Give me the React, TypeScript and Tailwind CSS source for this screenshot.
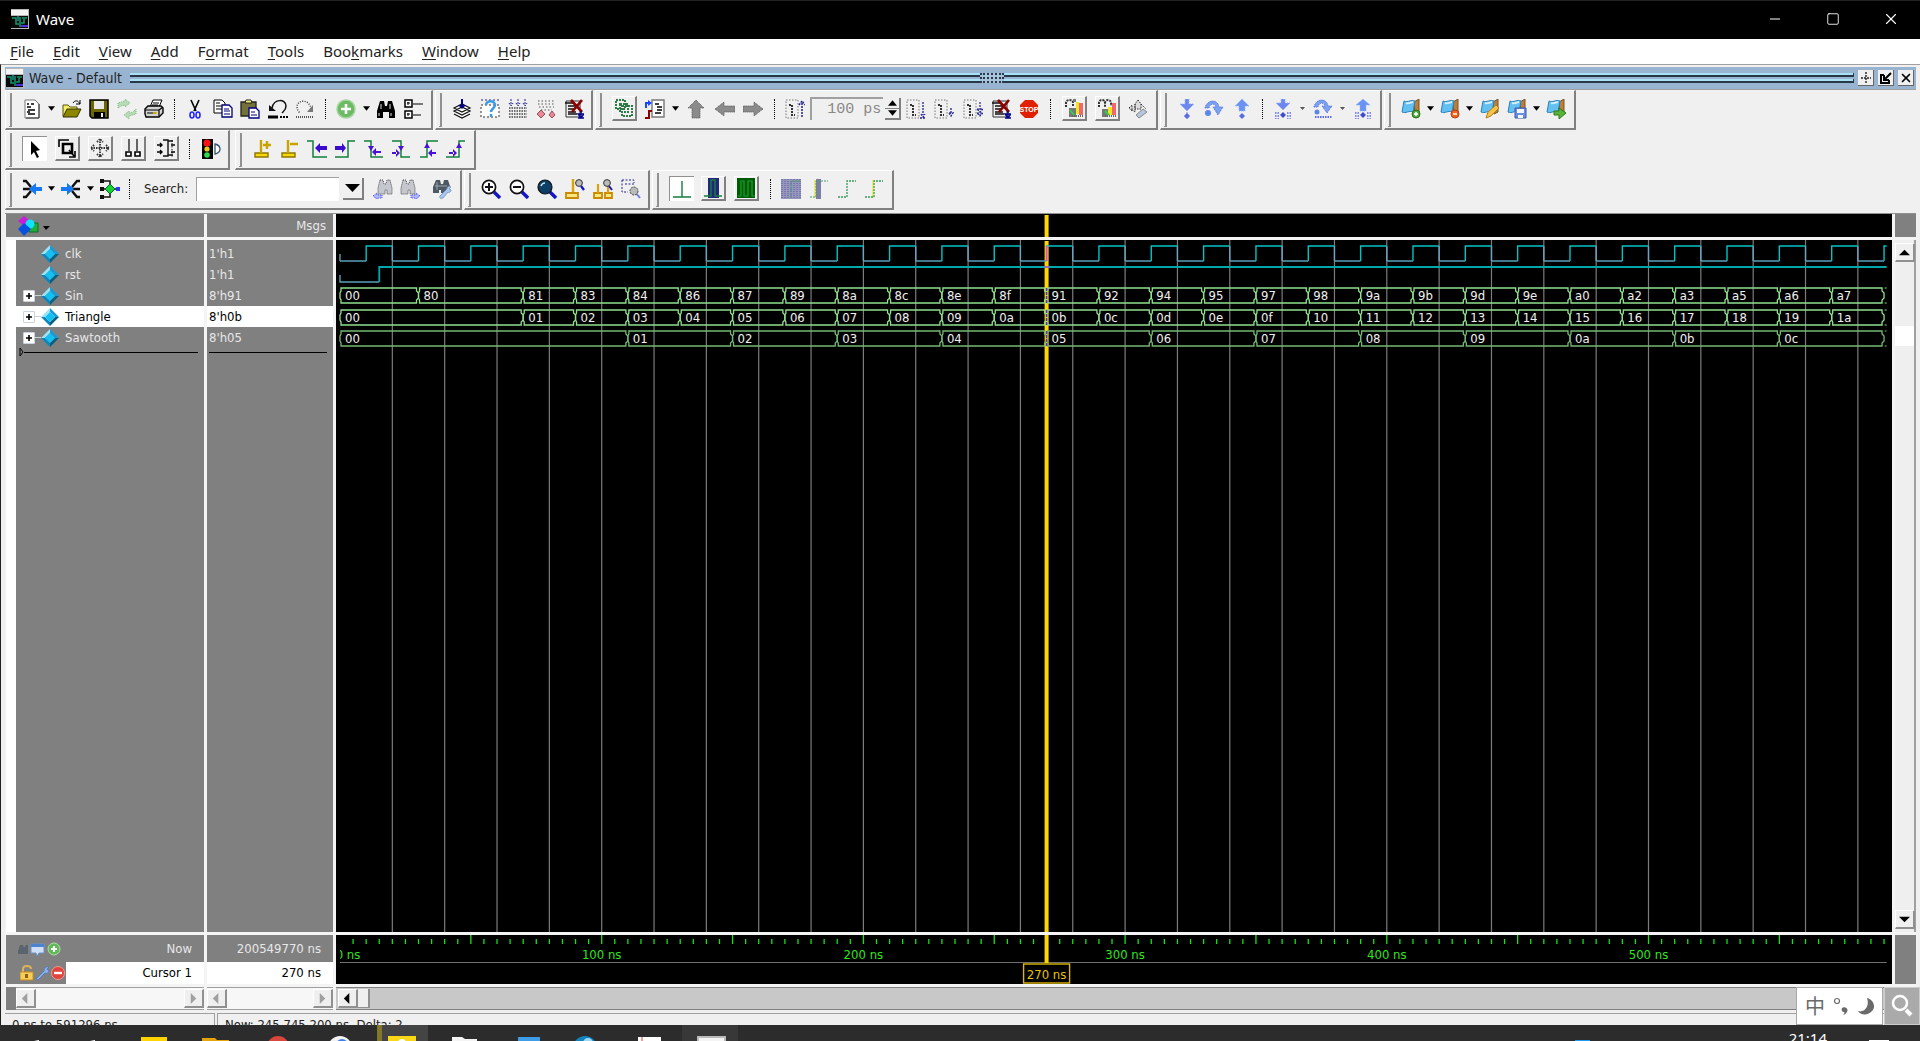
import type { ReactNode } from "react";
import { Minus, Square, X } from "lucide-react";

const UI = "font-['DejaVu_Sans_Condensed','DejaVu_Sans',sans-serif]";

// ---------- Icons ----------

function Svg({ children, w = 20 }: { children: ReactNode; w?: number }) {
    return (
        <svg width={w} height="20" viewBox={`0 0 ${w} 20`} fill="none" className="shrink-0">
            {children}
        </svg>
    );
}

function WaveLogo() {
    return (
        <Svg>
            <path d="M1 0h18v20H1z" fill="#b8b8b8" />
            <path d="M1 1h17v5H1z" fill="#f4f4f4" />
            <path d="M1 7h17v12H1z" fill="#0a0a0a" />
            <path d="M2 9h4v6h3M10 8v10M12 9h5M11 14h3v-4" stroke="#109a68" strokeWidth="1.5" />
            <path d="M8 7v5" stroke="#38c8e8" />
            <path d="M11 17h7" stroke="#4a2ee0" strokeWidth="2" />
        </Svg>
    );
}

const page = "M3 1h10l4 4v14H3z";
const stack = "M2 12l8-4 8 4-8 4zM2 15l8 4 8-4M2 9l8-4 8 4-8 4z";

const icons: Record<string, ReactNode> = {
    doc: (
        <Svg>
            <path d={page} fill="#fff" stroke="#777" />
            <path d="M5 5h2M9 5h3M5 8h4M6 11h7M5 13h3M6 15h7" stroke="#000" strokeWidth="1.3" />
            <path d="M17 5v14H4" stroke="#333" />
        </Svg>
    ),
    open: (
        <Svg>
            <path d="M1 17V6h5l2 2h7v3" fill="#f4ee66" stroke="#55500a" />
            <path d="M1 18l4-8h14l-4 8z" fill="#8c8600" stroke="#333000" />
            <path d="M11 4c2-3 5-3 7 1M18 1v4h-4" stroke="#000" />
        </Svg>
    ),
    save: (
        <Svg>
            <path d="M1 1h18v18H3l-2-2z" fill="#6b6600" stroke="#000" strokeWidth="1.5" />
            <path d="M5 2h10v8H5z" fill="#e8e8e8" />
            <path d="M5 13h11v6H5z" fill="#000" />
            <path d="M12 14h2v4h-2z" fill="#eee" />
        </Svg>
    ),
    refresh: (
        <Svg>
            <path d="M1 9V4l7-2V0l5 4-5 4V6L4 7zM19 10v5l-7 2v3l-5-4 5-4v2l4-1z" fill="#b5dcb5" stroke="#7fb97f" strokeDasharray="1 1" />
        </Svg>
    ),
    print: (
        <Svg>
            <path d="M6 8l3-7h9l-3 7z" fill="#fff" stroke="#000" />
            <path d="M9 4h6M8 6h6" stroke="#000" />
            <path d="M1 10l3-3h13l2 2v5l-4 4H2l-1-3z" fill="#d4d4d4" stroke="#000" strokeWidth="1.4" />
            <path d="M1 11h14v6M3 14h9M15 11l4-3" stroke="#000" strokeWidth="1.2" />
            <path d="M9 14h4" stroke="#e0c000" strokeWidth="1.5" />
        </Svg>
    ),
    cut: (
        <Svg>
            <path d="M6 1l5 11M14 1L9 12" stroke="#000" strokeWidth="1.6" />
            <ellipse cx="7" cy="16" rx="2" ry="3" stroke="#2424ff" strokeWidth="1.6" />
            <ellipse cx="13" cy="16" rx="2" ry="3" stroke="#2424ff" strokeWidth="1.6" />
        </Svg>
    ),
    copy: (
        <Svg>
            <path d="M1 1h8l3 3v10H1z" fill="#fff" stroke="#000" />
            <path d="M3 4h4M3 7h6M3 10h6" stroke="#000" />
            <path d="M9 6h7l3 3v9H9z" fill="#fff" stroke="#00007c" strokeWidth="1.3" />
            <path d="M11 10h5M11 12h6M11 15h6" stroke="#00007c" />
        </Svg>
    ),
    paste: (
        <Svg>
            <path d="M1 3h15v14H1z" fill="#74723a" stroke="#222" strokeWidth="1.3" />
            <path d="M5 4l1-3h5l1 3z" fill="#f4ee66" stroke="#222" />
            <path d="M9 9h7l3 3v7H9z" fill="#fff" stroke="#00007c" strokeWidth="1.3" />
            <path d="M11 13h4M11 16h6" stroke="#00007c" />
        </Svg>
    ),
    undo: (
        <Svg>
            <path d="M4 9C6-1 18 0 18 7c0 4-2 5-4 7" stroke="#111" strokeWidth="1.5" />
            <path d="M1 6v6h7z" fill="#111" />
            <path d="M0 18h10" stroke="#000" strokeWidth="3" />
            <path d="M12 18h8" stroke="#000" strokeWidth="2" strokeDasharray="2 1" />
        </Svg>
    ),
    redo: (
        <Svg>
            <path d="M16 10C15 0 2 0 2 8c0 3 2 5 3 6" stroke="#333" strokeWidth="1.4" strokeDasharray="1 1.4" />
            <path d="M18 6v7h-6z" fill="#777" />
            <path d="M1 18h18" stroke="#555" strokeWidth="2" strokeDasharray="1 1" />
        </Svg>
    ),
    plus: (
        <Svg>
            <circle cx="10" cy="10" r="9" fill="#6cbb62" stroke="#a3d49b" strokeWidth="1.5" />
            <path d="M10 5v10M5 10h10" stroke="#fff" strokeWidth="2.6" />
        </Svg>
    ),
    find: (
        <Svg>
            <path d="M4 2h4l1 5h2l1-5h4l3 10v7h-6v-6H7v6H1v-7z" fill="#000" />
            <path d="M5 5v5M14 5v5M3 14v3M15 14v3" stroke="#ddd" />
        </Svg>
    ),
    tree: (
        <Svg>
            <path d="M1 1h7v7H1zM1 12h7v7H1z" fill="#fff" stroke="#000" strokeWidth="1.5" />
            <path d="M3 4h3M4 3v3M3 15h3M4 14v3M9 5h10M9 16h8" stroke="#000" />
        </Svg>
    ),
    compile: (
        <Svg>
            <path d={stack} fill="#fff" stroke="#111" strokeWidth="1.2" />
            <path d="M9 0h2v6h3l-4 4-4-4h3z" fill="#00008b" />
        </Svg>
    ),
    question: (
        <Svg>
            <path d="M1 6h18v12H1z" fill="#fff" stroke="#333" strokeDasharray="2 2" />
            <path d="M1 1h18" stroke="#22228b" strokeDasharray="2 2" />
            <path d="M6 6c0-5 9-5 9 0 0 3-4 4-4 7M11 15v3" stroke="#3a9be8" strokeWidth="2.5" />
        </Svg>
    ),
    compileAll: (
        <Svg>
            <path d="M3 0v5M10 0v5M17 0v5M1 4l2 3 2-3M8 4l2 3 2-3M15 4l2 3 2-3" stroke="#22228b" strokeDasharray="2 1" />
            <path d="M1 9h18M1 12h18M1 15h18M1 18h18" stroke="#444" strokeWidth="1.6" strokeDasharray="1.5 1" />
        </Svg>
    ),
    elaborate: (
        <Svg>
            <path d="M2 2h16M2 5h16M3 8h15M5 11h11" stroke="#888" strokeWidth="1.5" strokeDasharray="1.5 2" />
            <path d="M5 11l4 4-4 4-4-4zM16 12l3 4-3 3-3-3z" fill="#e58a96" stroke="#985058" />
        </Svg>
    ),
    stopDoc: (
        <Svg>
            <path d="M2 2h14v16H2z" fill="#eee" stroke="#333" />
            <path d="M1 4h9M4 7h8M4 10h6M4 13h8M4 15h9" stroke="#111" strokeWidth="1.5" />
            <path d="M7 1l11 12M18 1L8 13" stroke="#8b0000" strokeWidth="2.6" />
            <path d="M17 12v6M14 15l3 4 3-4zM14 19h6" stroke="#00008b" strokeWidth="1.3" />
        </Svg>
    ),
    link: (
        <Svg>
            <path d="M2 2h9v9H2zM8 8h10v10H8zM6 6h8v8H6z" stroke="#2c7a45" strokeWidth="2" strokeDasharray="2 1" />
        </Svg>
    ),
    restart: (
        <Svg>
            <path d="M7 1h12v17H7z" fill="#fff" stroke="#777" strokeWidth="1.4" />
            <path d="M10 5h4M12 8h5M12 11h5M10 14h6" stroke="#000" strokeWidth="1.4" />
            <path d="M1 9V4h3" stroke="#1747ff" strokeWidth="2" />
            <path d="M3 1l4 3-4 3z" fill="#1747ff" />
            <path d="M0 19h4v-7h3" stroke="#8b0000" strokeWidth="2" />
        </Svg>
    ),
    up: (
        <Svg>
            <path d="M10 1l8 8h-4v10H6V9H2z" fill="#8b8b8b" stroke="#555" strokeDasharray="1 1" />
        </Svg>
    ),
    left: (
        <Svg>
            <path d="M0 10l9-7v4h11v6H9v4z" fill="#8b8b8b" stroke="#555" strokeDasharray="1 1" />
        </Svg>
    ),
    right: (
        <Svg>
            <path d="M20 10l-9-7v4H0v6h11v4z" fill="#8b8b8b" stroke="#555" strokeDasharray="1 1" />
        </Svg>
    ),
    runUp: (
        <Svg>
            <path d="M1 1h12v18H1z" stroke="#777" strokeDasharray="1.5 1.5" />
            <path d="M4 6h3v10h3" stroke="#333" strokeWidth="2" strokeDasharray="2 1" />
            <path d="M17 18V3M14 6l3-4 3 4" stroke="#22228b" strokeWidth="1.5" strokeDasharray="2 1" />
        </Svg>
    ),
    runA: (
        <Svg>
            <path d="M1 1h12v18H1z" stroke="#777" strokeDasharray="1.5 1.5" />
            <path d="M4 6h3v10h3" stroke="#333" strokeWidth="2" strokeDasharray="2 1" />
            <path d="M17 3v13M15 15l2 3 2-3M14 19h6" stroke="#22228b" strokeWidth="1.3" strokeDasharray="2 1" />
        </Svg>
    ),
    runB: (
        <Svg>
            <path d="M1 1h12v18H1z" stroke="#777" strokeDasharray="1.5 1.5" />
            <path d="M4 6h3v10h3" stroke="#333" strokeWidth="2" strokeDasharray="2 1" />
            <path d="M17 9v6M15 14l2 3 2-3z" stroke="#22228b" strokeWidth="1.3" strokeDasharray="2 1" />
        </Svg>
    ),
    runC: (
        <Svg>
            <path d="M1 1h12v18H1z" stroke="#777" strokeDasharray="1.5 1.5" />
            <path d="M4 6h3v10h3" stroke="#333" strokeWidth="2" strokeDasharray="2 1" />
            <path d="M17 3v13M14 10h6l-3 3zM14 14h6l-3 3z" stroke="#22228b" strokeWidth="1.2" strokeDasharray="2 1" />
        </Svg>
    ),
    stop: (
        <Svg>
            <path d="M6 1h8l5 5v8l-5 5H6l-5-5V6z" fill="#e02000" />
            <text x="10" y="13" textAnchor="middle" fontSize="7" fontWeight="700" fontFamily="Liberation Sans, sans-serif" fill="#fff">
                STOP
            </text>
        </Svg>
    ),
    profA: (
        <Svg>
            <path d="M2 9V5c0-4 7-4 7 0v4" stroke="#333" strokeWidth="2" strokeDasharray="2 1" />
            <path d="M5 10h7v9H5z" fill="#777" />
            <path d="M9 1h3v3H9z" fill="#777" />
            <path d="M12 4h3v12h-3z" fill="#f2e61f" />
            <path d="M15 5h4v12h-4z" fill="#f0686c" />
            <path d="M6 12l4 5" stroke="#2fd04c" strokeWidth="2" />
            <path d="M8 18h11" stroke="#666" strokeWidth="2" strokeDasharray="1 1" />
        </Svg>
    ),
    profB: (
        <Svg>
            <path d="M2 9V5c0-4 6-4 6 0v4M8 5c0-4 6-4 6 0v3" stroke="#333" strokeWidth="2" strokeDasharray="2 1" />
            <path d="M5 11h6v8H5z" fill="#777" />
            <path d="M11 9h4v8h-4z" fill="#f2e61f" />
            <path d="M15 5h4v12h-4z" fill="#f0686c" />
            <path d="M8 13l4 4" stroke="#2fd04c" strokeWidth="2" />
            <path d="M8 18h11" stroke="#666" strokeWidth="2" strokeDasharray="1 1" />
        </Svg>
    ),
    erase: (
        <Svg>
            <path d="M10 1l3 4v5H7V5zM1 9l3-3v6zM7 5v8l-4-3M13 5l5 5" fill="#ddd" stroke="#333" strokeDasharray="1.5 1" />
            <path d="M8 16l7-6 4 3-8 6z" fill="#b5c6dd" stroke="#888" />
        </Svg>
    ),
    stepIn: (
        <Svg>
            <path d="M8 0h4v5h5l-7 7-7-7h5z" fill="#6d87ee" stroke="#8fb4fa" strokeDasharray="1 1" />
            <path d="M10 13v2M10 14l3 3-3 3-3-3z" fill="#5a6ae8" stroke="#8090f0" strokeDasharray="1 1" />
        </Svg>
    ),
    stepOver: (
        <Svg>
            <path d="M1 9c2-9 13-9 14-1h4l-5 8-5-8h3c-1-4-6-4-7 1z" fill="#79a2f0" stroke="#4d63e0" strokeDasharray="1 1" />
            <circle cx="4" cy="14" r="3" fill="#5a88e8" />
        </Svg>
    ),
    stepOut: (
        <Svg>
            <path d="M10 0l7 7h-4v5H7V7H3z" fill="#6d93f2" stroke="#8fb4fa" strokeDasharray="1 1" />
            <path d="M10 14l3 3-3 3-3-3z" fill="#5a6ae8" />
        </Svg>
    ),
    stepInC: (
        <Svg>
            <path d="M8 0h4v4h5l-7 7-7-7h5z" fill="#6d87ee" stroke="#8fb4fa" strokeDasharray="1 1" />
            <path d="M10 13l3 3-3 3-3-3z" fill="#3d4ad8" />
            <path d="M2 14h5M2 17h5M2 20h5M14 14h5M14 17h5M14 20h5" stroke="#5a6ae8" strokeWidth="1.6" strokeDasharray="1.5 1" />
        </Svg>
    ),
    stepOverC: (
        <Svg>
            <path d="M1 8c2-9 13-9 14-1h4l-5 7-5-7h3c-1-4-6-4-7 1z" fill="#79a2f0" stroke="#4d63e0" strokeDasharray="1 1" />
            <circle cx="4" cy="13" r="2.5" fill="#5a88e8" />
            <path d="M2 18h17" stroke="#5a6ae8" strokeWidth="2" strokeDasharray="1.5 1" />
        </Svg>
    ),
    stepOutC: (
        <Svg>
            <path d="M10 0l7 6h-4v6H7V6H3z" fill="#6d93f2" stroke="#8fb4fa" strokeDasharray="1 1" />
            <path d="M10 13l3 3-3 3-3-3z" fill="#3d4ad8" />
            <path d="M2 14h5M2 17h5M2 20h5M14 14h5M14 17h5M14 20h5" stroke="#5a6ae8" strokeWidth="1.6" strokeDasharray="1.5 1" />
        </Svg>
    ),
    pointer: (
        <Svg>
            <path d="M6 2l9 9-4 1 3 6-2 1-3-6-3 3z" fill="#000" />
        </Svg>
    ),
    zoomArea: (
        <Svg>
            <path d="M2 9V2h10" stroke="#000" strokeWidth="1.6" />
            <path d="M6 6h9v9H6z" stroke="#000" strokeWidth="2.6" />
            <path d="M12 12l5 6M18 13v6h-6" stroke="#000" strokeWidth="1.6" />
        </Svg>
    ),
    pan: (
        <Svg>
            <path d="M10 1v18M1 10h18M7 4l3-3 3 3M7 16l3 3 3-3M4 7l-3 3 3 3M16 7l3 3-3 3" stroke="#333" strokeWidth="1.8" strokeDasharray="1.5 1" />
        </Svg>
    ),
    twoCursor: (
        <Svg>
            <path d="M6 1v12M14 1v12" stroke="#444" strokeWidth="1.6" />
            <path d="M3 14h5v4H3zM12 14h5v4h-5z" fill="#fff" stroke="#000" strokeWidth="1.6" />
        </Svg>
    ),
    editMode: (
        <Svg>
            <path d="M7 2h5v16H7M12 3h5M12 17h5" stroke="#111" strokeWidth="1.4" />
            <path d="M16 2v17" stroke="#111" strokeDasharray="1.5 1.5" />
            <path d="M1 7h5M1 14h5M4 5l2 2-2 2M4 12l2 2-2 2M19 7h-4M19 14h-4" stroke="#000" strokeWidth="1.4" />
        </Svg>
    ),
    traffic: (
        <Svg>
            <path d="M1 0h11v20H1z" fill="#000" />
            <circle cx="6" cy="4" r="3.6" fill="#ff1010" />
            <circle cx="6" cy="10" r="2.6" fill="#e8c820" />
            <circle cx="6" cy="16" r="2.8" fill="#30d850" />
            <path d="M14 5c4 1 5 3 5 5s-1 4-5 5z" fill="#fff" stroke="#35556b" strokeWidth="1.3" />
        </Svg>
    ),
    cursorAdd: (
        <Svg>
            <path d="M3 14h13v4H3z" fill="#f6d80c" stroke="#8f7500" strokeWidth="1.4" />
            <path d="M9 1v13M11 6h8M15 2v8" stroke="#c9a400" strokeWidth="2.4" />
        </Svg>
    ),
    cursorDel: (
        <Svg>
            <path d="M3 14h13v4H3z" fill="#f6d80c" stroke="#8f7500" strokeWidth="1.4" />
            <path d="M9 1v13M11 5h8" stroke="#c9a400" strokeWidth="2.4" />
        </Svg>
    ),
    prevEdge: (
        <Svg w={22}>
            <path d="M1 2h6v16h14" stroke="#12803a" strokeWidth="1.5" />
            <path d="M9 9l5-5v3h7v4h-7v3z" fill="#3b0bd0" />
        </Svg>
    ),
    nextEdge: (
        <Svg w={22}>
            <path d="M1 18h13V2h7" stroke="#12803a" strokeWidth="1.5" />
            <path d="M12 9L8 4v3H1v4h7v3z" fill="#3b0bd0" />
        </Svg>
    ),
    prevFall: (
        <Svg w={22}>
            <path d="M2 2h7v16h12" stroke="#12803a" strokeWidth="1.5" />
            <path d="M6 7h6l-3 5zM10 13l4-4v8zM13 12h6v2h-6z" fill="#4a12d8" />
        </Svg>
    ),
    nextFall: (
        <Svg w={22}>
            <path d="M2 2h9v16h9" stroke="#12803a" strokeWidth="1.5" />
            <path d="M8 7h6l-3 5zM10 14L6 10v8zM2 13h5v2H2z" fill="#4a12d8" />
        </Svg>
    ),
    prevRise: (
        <Svg w={22}>
            <path d="M2 18h7V2h11" stroke="#12803a" strokeWidth="1.5" />
            <path d="M6 9h6L9 4zM10 14l4-4v8zM13 13h5v2h-5z" fill="#4a12d8" />
        </Svg>
    ),
    nextRise: (
        <Svg w={22}>
            <path d="M1 18h13V2h6" stroke="#12803a" strokeWidth="1.5" />
            <path d="M11 9h6l-3-5zM12 14l-4-4v8zM4 13h5v2H4z" fill="#4a12d8" />
        </Svg>
    ),
    mergeL: (
        <Svg>
            <path d="M1 2h3l5 6M1 10h8M1 18h3l5-6" stroke="#111" strokeWidth="2.4" />
            <path d="M7 10l7-6v4h6v4h-6v4z" fill="#1479f2" />
        </Svg>
    ),
    mergeR: (
        <Svg>
            <path d="M19 2h-3l-5 6M19 10h-8M19 18h-3l-5-6" stroke="#111" strokeWidth="2.4" />
            <path d="M13 10L6 4v4H0v4h6v4z" fill="#1479f2" />
        </Svg>
    ),
    node: (
        <Svg>
            <path d="M3 2h7v16H3M3 10h13" stroke="#111" strokeWidth="1.5" />
            <path d="M0 0h4v4H0zM0 8h4v4H0zM0 16h4v4H0z" fill="#111" />
            <path d="M10 5l5 5-5 5-5-5z" fill="#15d335" stroke="#063" />
            <path d="M16 8h4v4h-4z" fill="#2b3cf5" />
        </Svg>
    ),
    findPrev: (
        <Svg>
            <path d="M7 1h3l1 4h2l1-4h3l2 8v6h-5v-4h-2v4H5V9z" fill="#c4c8ce" stroke="#444" strokeDasharray="1 1" />
            <path d="M0 17l4-3v2h5v3H4v1z" fill="#b0b6ff" stroke="#4450e8" strokeDasharray="1 1" />
        </Svg>
    ),
    findNext: (
        <Svg>
            <path d="M3 1h3l1 4h2l1-4h3l2 8v6h-5v-4H8v4H1V9z" fill="#c4c8ce" stroke="#444" strokeDasharray="1 1" />
            <path d="M20 17l-4-3v2h-5v3h5v1z" fill="#b0b6ff" stroke="#4450e8" strokeDasharray="1 1" />
        </Svg>
    ),
    findOpts: (
        <Svg>
            <path d="M4 1h4l1 4h2l1-4h4l2 6-5 7H9v-3H7v3H1V8z" fill="#4e5862" />
            <path d="M3 7h12M5 3v8" stroke="#9aa6b2" />
            <path d="M8 17l7-7c0-3 3-3 4-2l-2 2 2 1c0 2-2 3-3 2l-5 6c-2 1-4 0-3-2z" fill="#a9c8f0" stroke="#7d99c0" />
        </Svg>
    ),
    zoomIn: (
        <Svg>
            <path d="M13 13l6 6" stroke="#1414c8" strokeWidth="3.4" />
            <circle cx="8" cy="8" r="6.6" fill="#fff" stroke="#111" strokeWidth="1.7" />
            <path d="M8 4v8M4 8h8" stroke="#111" strokeWidth="2" />
        </Svg>
    ),
    zoomOut: (
        <Svg>
            <path d="M13 13l6 6" stroke="#1414c8" strokeWidth="3.4" />
            <circle cx="8" cy="8" r="6.6" fill="#fff" stroke="#111" strokeWidth="1.7" />
            <path d="M4 8h8" stroke="#111" strokeWidth="2" />
        </Svg>
    ),
    zoomFull: (
        <Svg>
            <path d="M13 13l6 6" stroke="#1414c8" strokeWidth="3.4" />
            <circle cx="8" cy="8" r="7" fill="#0c3e66" stroke="#111" strokeWidth="1.2" />
            <path d="M4 7c1-3 3-3 4-3" stroke="#c7e4f6" strokeWidth="1.5" />
        </Svg>
    ),
    zoomCursor: (
        <Svg>
            <path d="M1 14h12v5H1z" fill="#ffe680" stroke="#c98a00" strokeWidth="1.8" />
            <path d="M8 0v13" stroke="#dba400" strokeWidth="2.4" />
            <path d="M16 7l3 4" stroke="#1414c8" strokeWidth="2.4" />
            <circle cx="14" cy="4" r="3.4" fill="#bbb" stroke="#333" />
        </Svg>
    ),
    zoomTwo: (
        <Svg>
            <path d="M1 14h8v5H1zM12 14h7v5h-7z" fill="#ffe680" stroke="#c98a00" strokeWidth="1.8" />
            <path d="M5 5v9M15 5v9" stroke="#dba400" strokeWidth="2.2" />
            <path d="M16 7l3 4" stroke="#1414c8" strokeWidth="2" />
            <circle cx="14" cy="4" r="3.4" fill="#bbb" stroke="#333" />
        </Svg>
    ),
    zoomSel: (
        <Svg>
            <path d="M1 1h12v3M1 1v12h6M4 5h10" stroke="#22228b" strokeDasharray="2 1.5" />
            <path d="M15 14l4 5" stroke="#6c7ce0" strokeWidth="2" />
            <circle cx="13" cy="12" r="4" fill="#bbb" stroke="#444" strokeDasharray="2 1" />
        </Svg>
    ),
    expNone: (
        <Svg>
            <path d="M10 2v16M1 18h18" stroke="#12803a" strokeWidth="1.4" />
        </Svg>
    ),
    expDelta: (
        <Svg>
            <path d="M5 0h11v20H5z" fill="#24267e" />
            <path d="M1 18h7V2h4v16h7" stroke="#12803a" strokeWidth="1.4" />
        </Svg>
    ),
    expEvent: (
        <Svg>
            <path d="M1 0h18v20H1z" fill="#005a00" />
            <path d="M2 18h3V3h3v15h4V3h4v15h3" stroke="#18a038" strokeWidth="1.2" />
        </Svg>
    ),
    expAll: (
        <Svg>
            <path d="M0 0h20v20H0z" fill="#9797bd" />
            <path d="M1 0v20M4 0v20M7 0v20M10 0v20M13 0v20M16 0v20M19 0v20" stroke="#5b5ba0" strokeDasharray="1 1" />
            <path d="M10 19V2h9" stroke="#479d6d" strokeDasharray="2 1" />
        </Svg>
    ),
    expCur: (
        <Svg>
            <path d="M7 0h5v20H7z" fill="#7d7da8" />
            <path d="M6 1v18" stroke="#e8e84a" strokeWidth="1.5" />
            <path d="M1 18h6V2h12" stroke="#479d6d" strokeDasharray="2 1" />
        </Svg>
    ),
    colAll: (
        <Svg>
            <path d="M1 18h9V2h9" stroke="#359a5c" strokeWidth="1.3" strokeDasharray="2 1" />
        </Svg>
    ),
    colCur: (
        <Svg>
            <path d="M9 1v18" stroke="#ecec3c" strokeWidth="1.5" />
            <path d="M1 18h9V2h9" stroke="#359a5c" strokeWidth="1.3" strokeDasharray="2 1" />
        </Svg>
    ),
};

function Bookmark({ children }: { children: ReactNode }) {
    return (
        <Svg>
            <path d="M13 3l5-3v13l-4 2z" fill="#b9803c" stroke="#7c5220" />
            <path d="M3 2c4 2 7-2 11 0l-2 11c-4-2-7 2-11 0z" fill="#62c0f2" stroke="#2f7fb5" />
            <path d="M5 4c3 1 5-1 7-1" stroke="#d4f0ff" strokeWidth="2" />
            {children}
        </Svg>
    );
}

icons.bmAdd = (
    <Bookmark>
        <circle cx="15" cy="15" r="4" fill="#4fa83c" stroke="#2b6f1e" />
        <path d="M15 13v4M13 15h4" stroke="#fff" strokeWidth="1.5" />
    </Bookmark>
);
icons.bmDel = (
    <Bookmark>
        <circle cx="15" cy="15" r="4" fill="#f0641e" stroke="#b94010" />
        <path d="M13 15h4" stroke="#fff" strokeWidth="1.5" />
    </Bookmark>
);
icons.bmEdit = (
    <Bookmark>
        <path d="M6 19l2-6 8-7 3 3-8 8z" fill="#f3c24a" stroke="#b5801e" />
    </Bookmark>
);
icons.bmSave = (
    <Bookmark>
        <path d="M8 9h11v10H8z" fill="#6c8ee0" stroke="#3b58a8" />
        <path d="M10 10h7v4h-7zM11 16h5v3h-5z" fill="#f4f6ff" />
    </Bookmark>
);
icons.bmGo = (
    <Bookmark>
        <path d="M8 12h5V9l7 5-7 6v-4H8z" fill="#58b53a" stroke="#2c7a1b" />
    </Bookmark>
);

// ---------- Toolbars ----------

// "v" = drop-down arrow, "d" = small dimmed arrow, "|" = separator, "[name]" = raised toggle, "(name)" = pressed toggle
function Tool({ item }: { item: string }) {
    if (item === "|") {
        return <div className="w-[13px] shrink-0 flex justify-center"><div className="h-5 border-l border-dotted border-black" /></div>;
    }
    if (item === "v" || item === "d") {
        const w = item === "v" ? 7 : 5;
        return (
            <button aria-label="More" className="w-3 shrink-0 flex justify-center">
                <svg width={w} height="5" viewBox="0 0 8 5"><path d="M0 0h8L4 5z" fill={item === "v" ? "#000" : "#555"} /></svg>
            </button>
        );
    }
    if (item[0] === "[" || item[0] === "(") {
        const name = item.slice(1, -1);
        return (
            <div className="w-8 shrink-0 flex justify-center">
                <button
                    aria-label={name}
                    className={
                        item[0] === "["
                            ? "size-[25px] flex items-center justify-center border-t border-l border-r-2 border-b-2 border-t-white border-l-white border-r-[#808080] border-b-[#808080]"
                            : "size-[25px] flex items-center justify-center bg-white border-t border-l border-[#909090]"
                    }
                >
                    {icons[name]}
                </button>
            </div>
        );
    }
    return (
        <button aria-label={item} className="w-[27px] h-6 shrink-0 flex items-center justify-center">
            {icons[item]}
        </button>
    );
}

function Tools({ items }: { items: string }) {
    return <>{items.split(" ").map((item, i) => <Tool key={i} item={item} />)}</>;
}

function Group({ width, children }: { width: string; children: ReactNode }) {
    return (
        <div className={`${width} h-10 shrink-0 flex items-start border-t border-l border-t-white border-l-white border-r-2 border-b-2 border-r-[#808080] border-b-[#808080]`}>
            <div className="w-[3px] h-[34px] mt-[2px] ml-[3px] shrink-0 border-r-2 border-b border-[#909090]" />
            <div className="flex-1 h-[35px] pl-[6px] pr-1 flex items-center justify-between">{children}</div>
        </div>
    );
}

// ---------- Wave data ----------

const PX_PER_NS = 2.617;
const CURSOR = 270;
const END = 591;
const tx = (ns: number) => 4 + ns * PX_PER_NS;
const range = (from: number, to: number, step: number) =>
    Array.from({ length: Math.floor((to - from) / step) + 1 }, (_, i) => from + i * step);
const hex = (n: number) => n.toString(16).padStart(2, "0");

const sinValues = "81 83 84 86 87 89 8a 8c 8e 8f 91 92 94 95 97 98 9a 9b 9d 9e a0 a2 a3 a5 a6 a7".split(" ");

const buses: { top: number; color: string; steps: [number, string][] }[] = [
    { top: 48, color: "#90e090", steps: [[0, "00"], [30, "80"], ...sinValues.map((v, i): [number, string] => [70 + i * 20, v])] },
    { top: 70, color: "#90e090", steps: [[0, "00"], ...range(70, 570, 20).map((t, i): [number, string] => [t, hex(i + 1)])] },
    { top: 91, color: "#74b874", steps: [[0, "00"], ...range(110, 550, 40).map((t, i): [number, string] => [t, hex(i + 1)])] },
];

const signals = [
    { name: "clk", value: "1'h1" },
    { name: "rst", value: "1'h1" },
    { name: "Sin", value: "8'h91", bus: true },
    { name: "Triangle", value: "8'h0b", bus: true, selected: true },
    { name: "Sawtooth", value: "8'h05", bus: true },
];

function Bus({ top, color, steps }: (typeof buses)[number]) {
    const bottom = top + 15;
    return (
        <g>
            {steps.map(([t, label], i) => {
                const x1 = tx(t);
                const x2 = tx(i + 1 < steps.length ? steps[i + 1][0] : 590);
                return (
                    <g key={t}>
                        <path
                            d={`M${x2 - 2} ${top}H${x1 + 1}V${top + 3}L${x1} ${top + 5}V${bottom - 5}L${x1 + 1} ${bottom - 3}V${bottom}H${x2 - 2}V${bottom - 3}L${x2} ${bottom - 5}V${top + 5}L${x2 - 2} ${top + 3}Z`}
                            fill="none"
                            stroke={color}
                            strokeWidth="1.3"
                        />
                        <text x={x1 + 5} y={top + 12} fontSize="13" fill="#f0f0f0">{label}</text>
                    </g>
                );
            })}
            <path d={`M${tx(END)} ${top}h-2M${tx(END)} ${bottom}h-2`} stroke={color} />
        </g>
    );
}

function Waves() {
    const edges = range(10, 590, 20);
    return (
        <svg width="100%" height="100%" className="block">
            {range(20, 580, 20).map((t) => (
                <line key={t} x1={tx(t)} x2={tx(t)} y1="0" y2="100%" stroke="#7c7c7c" strokeWidth="1.2" />
            ))}
            <line x1={tx(CURSOR)} x2={tx(CURSOR)} y1="1" y2="100%" stroke="#ffd700" strokeWidth="4" />
            <path d={`M4 14v7${[0, ...range(20, 580, 20)].map((t) => `M${tx(t)} 21H${tx(t + 10)}`).join("")}`} stroke="#5aa0b8" strokeWidth="1.4" fill="none" />
            <path d={range(20, 580, 20).map((t) => `M${tx(t)} 6V21`).join("")} stroke="#6aa5c4" strokeWidth="1.4" />
            <path d={edges.map((t) => `M${tx(t)} 21V6H${tx(Math.min(t + 10, END))}`).join("")} stroke="#00c4c8" strokeWidth="1.4" fill="none" />
            <path d={`M4 35v7H${tx(15)}`} stroke="#5aa0b8" strokeWidth="1.4" fill="none" />
            <path d={`M${tx(15)} 42V27H${tx(END)}`} stroke="#00a8ac" strokeWidth="1.8" fill="none" />
            {buses.map((b) => <Bus key={b.top} {...b} />)}
            <path d={`M${tx(CURSOR)} 21V6M${tx(CURSOR) - 2} 27h4`} stroke="#ff40c0" strokeWidth="1.6" />
            <path d={`M${tx(CURSOR)} 48v15M${tx(CURSOR)} 70v15M${tx(CURSOR)} 91v15`} stroke="#6030b0" strokeWidth="1.6" strokeDasharray="3 1" />
        </svg>
    );
}

function Ruler() {
    const cx = tx(CURSOR);
    return (
        <svg width="100%" height="49" className="block">
            {range(5, 590, 5).map((t) => (
                <line key={t} x1={tx(t)} x2={tx(t)} y1={t % 50 ? 4 : 0} y2="9" stroke="#18e018" strokeWidth="1.3" />
            ))}
            <clipPath id="plot"><rect x="4" y="0" width="1600" height="49" /></clipPath>
            <g clipPath="url(#plot)">
                {range(0, 500, 100).map((t) => (
                    <text key={t} x={t ? tx(t) : tx(t) + 8} y="24" textAnchor="middle" fontSize="13" fill="#2ee61e">{t} ns</text>
                ))}
            </g>
            <path d={`M4 27.5H${tx(END)}`} stroke="#707070" />
            <path d={`M${cx} 0V28`} stroke="#ffd700" strokeWidth="4" />
            <rect x={cx - 23} y="29" width="46" height="19" stroke="#e0b800" strokeWidth="1.4" fill="#000" />
            <text x={cx} y="44" textAnchor="middle" fontSize="13" fill="#e8c400">270 ns</text>
        </svg>
    );
}

function Gem() {
    return (
        <svg width="18" height="18" viewBox="0 0 18 18" className="shrink-0">
            <path d="M9 0L0 9l4 0 5-5z" fill="#9ae4f8" />
            <path d="M9 0l9 9h-4L9 4z" fill="#1a9ad4" />
            <path d="M0 9l9 9v-4L4 9z" fill="#0c86be" />
            <path d="M18 9l-9 9v-4l5-5z" fill="#06607f" />
            <path d="M9 4l5 5-5 5-5-5z" fill="#12c0f4" />
        </svg>
    );
}

function ScrollButton({ dir, dim }: { dir: "left" | "right" | "up" | "down"; dim?: boolean }) {
    const paths = { left: "M8 0v12L2 6z", right: "M3 0v12l6-6z", up: "M0 9h12L6 3z", down: "M0 3h12L6 9z" };
    return (
        <button aria-label={`Scroll ${dir}`} className="w-5 h-[19px] shrink-0 flex items-center justify-center bg-[#efefef] border-t border-l border-r-2 border-b-2 border-t-white border-l-white border-r-[#909090] border-b-[#909090]">
            <svg width="11" height="11" viewBox="0 0 12 12"><path d={paths[dir]} fill={dim ? "#a0a0a0" : "#000"} /></svg>
        </button>
    );
}

const menus = [["", "F", "ile"], ["", "E", "dit"], ["", "V", "iew"], ["", "A", "dd"], ["F", "o", "rmat"], ["", "T", "ools"], ["Boo", "k", "marks"], ["", "W", "indow"], ["", "H", "elp"]];

const cols = "grid grid-cols-[198px_126px_1fr_21px] gap-x-[3px]";

export default function App() {
    return (
        <div className={`relative h-screen flex flex-col overflow-hidden bg-[#f0f0f0] text-[13px] ${UI}`}>
            {/* Title bar */}
            <header className="h-[39px] shrink-0 pl-[10px] pb-[2px] flex items-center bg-black border-t border-[#222] text-white font-['Noto_Sans',sans-serif]">
                <WaveLogo />
                <h1 className="ml-[6px] text-[15px]">Wave</h1>
                <div className="ml-auto h-full flex">
                    <button aria-label="Minimize" className="w-[58px] flex items-center justify-center"><Minus size={16} strokeWidth={1.5} /></button>
                    <button aria-label="Maximize" className="w-[58px] flex items-center justify-center"><Square size={14} strokeWidth={1.5} /></button>
                    <button aria-label="Close" className="w-[58px] flex items-center justify-center"><X size={18} strokeWidth={1.5} /></button>
                </div>
            </header>

            {/* Menu */}
            <nav className="h-[25px] shrink-0 pl-[10px] pb-px flex items-center gap-[19px] bg-white text-[15px] text-[#222] font-['Noto_Sans',sans-serif]">
                {menus.map(([a, b, c]) => (
                    <button key={b + c}>{a}<span className="underline underline-offset-2">{b}</span>{c}</button>
                ))}
            </nav>

            <main className="flex-1 min-h-0 flex flex-col pl-1 pr-1 border-l border-t border-l-[#222] border-t-[#a0a0a0]">
                {/* Dock title */}
                <div className="mt-[2px] h-[22px] shrink-0 pr-[2px] flex items-center bg-[#99b4d1] text-[#222]">
                    <WaveLogo />
                    <h2 className="ml-1 mr-2 text-sm">Wave - Default</h2>
                    <div className="flex-1 flex flex-col gap-[2px]">
                        <div className="h-1 bg-[#a8e0f4] border-b-2 border-[#283848]" />
                        <div className="h-1 bg-[#a8e0f4] border-b-2 border-[#283848]" />
                    </div>
                    <div className="w-6 h-[10px] flex flex-col justify-between bg-[#a8c4dc]">
                        <div className="border-t-2 border-dotted border-[#283848]" />
                        <div className="border-t-2 border-dotted border-[#283848]" />
                        <div className="border-t-2 border-dotted border-[#283848]" />
                    </div>
                    <div className="flex-1 mr-1 flex flex-col gap-[2px]">
                        <div className="h-1 bg-[#a8e0f4] border-b-2 border-r border-[#283848]" />
                        <div className="h-1 bg-[#a8e0f4] border-b-2 border-r border-[#283848]" />
                    </div>
                    <div className="flex gap-1 text-black">
                        <button aria-label="Zoom pane" className="size-4 flex items-center justify-center bg-[#f0f0f0] border-r border-b border-[#666]">
                            <svg width="12" height="12" viewBox="0 0 12 12"><path d="M6 0v12M1 6h10" stroke="#222" strokeWidth="1.4" strokeDasharray="2 1" /></svg>
                        </button>
                        <button aria-label="Undock" className="size-4 flex items-center justify-center bg-[#f0f0f0] border-r border-b border-[#666]">
                            <svg width="12" height="12" viewBox="0 0 12 12" fill="none"><path d="M4 3H1v8h8V8M11 1L5 7M4 3v5h5" stroke="#000" strokeWidth="2" /></svg>
                        </button>
                        <button aria-label="Close pane" className="size-4 flex items-center justify-center bg-[#f0f0f0] border-r border-b border-[#666]">
                            <X size={14} strokeWidth={3} />
                        </button>
                    </div>
                </div>

                {/* Toolbars */}
                <div className="shrink-0 border-t border-[#a0a0a0]">
                    <div className="flex gap-[2px]">
                        <Group width="w-[428px]"><Tools items="doc v open save refresh print | cut copy paste undo redo | plus v find tree" /></Group>
                        <Group width="w-[158px]"><Tools items="compile question compileAll elaborate stopDoc" /></Group>
                        <Group width="w-[563px]">
                            <Tools items="[link] restart v up left right | runUp" />
                            <div className="flex items-center gap-[2px]">
                                <input
                                    aria-label="Run length"
                                    defaultValue="100 ps"
                                    className="w-[73px] h-[23px] pr-[2px] text-right text-[15px] text-[#888] border-t-2 border-l-2 border-[#a0a0a0] font-['Liberation_Mono',monospace]"
                                />
                                <div className="w-4 flex flex-col">
                                    <button aria-label="Increase" className="h-[11px] flex items-center justify-center border-r-2 border-b border-[#808080]">
                                        <svg width="9" height="6" viewBox="0 0 10 6"><path d="M0 6h10L5 0z" /></svg>
                                    </button>
                                    <button aria-label="Decrease" className="h-[11px] flex items-center justify-center border-r-2 border-b-2 border-[#808080]">
                                        <svg width="9" height="6" viewBox="0 0 10 6"><path d="M0 0h10L5 6z" /></svg>
                                    </button>
                                </div>
                            </div>
                            <Tools items="runA runB runC stopDoc stop | [profA] [profB] erase" />
                        </Group>
                        <Group width="w-[222px]"><Tools items="stepIn stepOver stepOut | stepInC d stepOverC d stepOutC" /></Group>
                        <Group width="w-[192px]"><Tools items="bmAdd v bmDel v bmEdit bmSave v bmGo" /></Group>
                    </div>
                    <div className="flex gap-[5px]">
                        <Group width="w-[225px]"><Tools items="(pointer) [zoomArea] [pan] [twoCursor] [editMode] | traffic" /></Group>
                        <Group width="w-[241px]"><Tools items="cursorAdd cursorDel prevEdge nextEdge prevFall nextFall prevRise nextRise" /></Group>
                    </div>
                    <div className="flex gap-[2px]">
                        <Group width="w-[457px]">
                            <div className="flex items-center">
                                <Tools items="mergeL v mergeR v node |" />
                                <label htmlFor="search" className="mx-2 text-[#222]">Search:</label>
                                <input id="search" type="text" className="w-[143px] h-6 px-1 bg-white border-t border-l border-[#a0a0a0]" />
                                <button aria-label="Search history" className="ml-1 w-[21px] h-[22px] flex items-center justify-center border-r-2 border-b-2 border-[#808080]">
                                    <svg width="15" height="8" viewBox="0 0 15 8"><path d="M0 0h15L7.5 8z" /></svg>
                                </button>
                            </div>
                            <div className="flex"><Tools items="findPrev findNext" /></div>
                            <Tools items="findOpts" />
                        </Group>
                        <Group width="w-[186px]"><Tools items="zoomIn zoomOut zoomFull zoomCursor zoomTwo zoomSel" /></Group>
                        <Group width="w-[242px]"><Tools items="(expNone) [expDelta] [expEvent] | expAll expCur colAll colCur" /></Group>
                    </div>
                </div>

                {/* Wave window */}
                <section className="flex-1 min-h-0 mt-[3px] pl-px flex flex-col gap-[3px] bg-[#f4f4f4] border-t border-[#909090] text-[#e8e8e8]">
                    <div className={`${cols} h-[23px] shrink-0`}>
                        <div className="pl-3 flex items-center bg-[#808080]">
                            <svg width="21" height="20" viewBox="0 0 21 20">
                                <path d="M6 0l6 5-6 5-6-5z" fill="#c81ed8" />
                                <path d="M11 7h9v9h-9z" fill="#1fae3c" stroke="#0c6d20" />
                                <circle cx="12" cy="8" r="4.5" fill="#10e4fa" />
                                <path d="M6 7l7 6-7 7-6-7z" fill="#0a50e0" />
                            </svg>
                            <button aria-label="Signal options" className="ml-1 pt-1"><svg width="7" height="4" viewBox="0 0 7 4"><path d="M0 0h7L3 4z" /></svg></button>
                        </div>
                        <div className="pr-[7px] pt-px flex items-center justify-end bg-[#808080]">Msgs</div>
                        <div className="bg-black">
                            <svg width="100%" height="23" className="block"><path d={`M${tx(CURSOR)} 1v22`} stroke="#ffd700" strokeWidth="4" /></svg>
                        </div>
                        <div className="bg-[#808080]" />
                    </div>

                    <div className={`${cols} flex-1 min-h-0`}>
                        <div className="pl-[10px] bg-white">
                            <ul className="h-full pt-[3px] bg-[#808080]">
                                {signals.map((s) => (
                                    <li key={s.name} className={`h-[21px] pl-[7px] flex items-center ${s.selected ? "bg-white text-black" : ""}`}>
                                        {s.bus ? (
                                            <button aria-label={`Expand ${s.name}`} className="size-3 flex items-center justify-center rounded-[1px] bg-white text-black border border-[#cdd3dd]">
                                                <svg width="8" height="8" viewBox="0 0 8 8"><path d="M4 1v6M1 4h6" stroke="#000" strokeWidth="1.6" /></svg>
                                            </button>
                                        ) : (
                                            <span className="w-3" />
                                        )}
                                        <span className={`w-[6px] ${s.bus ? "border-t border-[#d0d0d0]" : ""}`} />
                                        <Gem />
                                        <span className="ml-[6px]">{s.name}</span>
                                    </li>
                                ))}
                                <li className="pl-[3px] pr-[6px] h-2 flex items-center">
                                    <svg width="5" height="8" viewBox="0 0 5 8"><path d="M1 0v8l3-4z" fill="none" stroke="#000" /></svg>
                                    <span className="flex-1 border-t border-black" />
                                </li>
                            </ul>
                        </div>
                        <ul className="pt-[3px] bg-[#808080]">
                            {signals.map((s) => (
                                <li key={s.name} className={`h-[21px] pl-[2px] flex items-center ${s.selected ? "bg-white text-black" : ""}`}>{s.value}</li>
                            ))}
                            <li className="h-2 px-[2px] flex items-center"><span className="flex-1 mr-1 border-t border-black" /></li>
                        </ul>
                        <div className="min-h-0 overflow-hidden bg-black"><Waves /></div>
                        <div className="py-[3px] flex flex-col bg-[#efefef] border-r-2 border-[#a0a0a0]">
                            <ScrollButton dir="up" />
                            <div className="h-16" />
                            <div className="h-5 bg-white" />
                            <div className="flex-1" />
                            <ScrollButton dir="down" />
                        </div>
                    </div>

                    <div className={`${cols} h-[49px] shrink-0`}>
                        <div className="flex flex-col bg-[#808080]">
                            <div className="h-[27px] pl-[11px] pr-3 flex items-center">
                                <svg width="44" height="14" viewBox="0 0 44 14">
                                    <path d="M1 9l2-6h3l1 3 2-3h2v9H1z" fill="#59646e" />
                                    <path d="M14 2h13v9h-5l-2 3-1-3h-5z" fill="#cfe0f6" stroke="#6f93c8" />
                                    <path d="M14 2h13v3H14z" fill="#4d83cc" />
                                    <circle cx="37" cy="7" r="6" fill="#62b957" stroke="#b2dcab" />
                                    <path d="M37 4v6M34 7h6" stroke="#fff" strokeWidth="2" />
                                </svg>
                                <span className="ml-auto">Now</span>
                            </div>
                            <div className="h-[22px] pl-[14px] flex items-center">
                                <svg width="46" height="16" viewBox="0 0 46 16" fill="none">
                                    <path d="M3 7V4c0-4 8-4 8 0" stroke="#d8b45c" strokeWidth="2" />
                                    <path d="M0 7h13v8H0z" fill="#f7cc5c" stroke="#c28e20" />
                                    <path d="M5 9h3v4H5z" fill="#8c6410" />
                                    <path d="M16 14l8-8c0-4 3-5 5-4l-2 2 2 2c0 2-3 3-4 2l-7 7z" fill="#86b0ec" stroke="#5a7db4" />
                                    <circle cx="38" cy="8" r="6.5" fill="#e0443c" stroke="#f09a94" />
                                    <path d="M34 8h8" stroke="#fff" strokeWidth="2.4" />
                                </svg>
                                <span className="flex-1 h-full pr-3 flex items-center justify-end bg-white text-black">Cursor 1</span>
                            </div>
                        </div>
                        <div className="flex flex-col bg-[#808080]">
                            <div className="h-[27px] pr-3 flex items-center justify-end">200549770 ns</div>
                            <div className="h-[22px] pr-3 flex items-center justify-end bg-white text-black">270 ns</div>
                        </div>
                        <div className="overflow-hidden bg-black"><Ruler /></div>
                        <div className="bg-[#808080]" />
                    </div>

                    <div className={`${cols} h-[23px] shrink-0`}>
                        <div className="pl-[10px] bg-[#808080]">
                            <div className="h-full flex items-center justify-between bg-[#f7f7f7] border-y border-[#a0a0a0]"><ScrollButton dir="left" dim /><ScrollButton dir="right" dim /></div>
                        </div>
                        <div className="flex items-center justify-between bg-[#f7f7f7] border-y border-[#a0a0a0]"><ScrollButton dir="left" dim /><ScrollButton dir="right" dim /></div>
                        <div className="col-span-2 pl-[2px] flex items-center bg-[#c8c8c8] border-y border-[#808080]">
                            <ScrollButton dir="left" />
                            <div className="w-3 h-[19px] bg-[#efefef] border-r-2 border-b border-[#909090]" />
                        </div>
                    </div>
                </section>

                {/* Status bar */}
                <footer className="h-[15px] shrink-0 pt-[3px] flex gap-[2px] overflow-hidden whitespace-pre text-[#222]">
                    <div className="w-[210px] h-6 pt-[3px] pl-[7px] leading-4 border-t border-r border-[#a0a0a0]">0 ns to 591296 ns</div>
                    <div className="flex-1 h-6 pt-[3px] pl-[7px] leading-4 border-t border-l border-[#a0a0a0]">Now: 245,745,200 ns  Delta: 2</div>
                </footer>
            </main>

            {/* Taskbar */}
            <div className="h-4 shrink-0 flex items-start overflow-hidden bg-[#2c2c2c]">
                <svg width="760" height="16" viewBox="0 0 760 16" className="shrink-0">
                    <path d="M34 16l5-1v1zM90 16l5-1v1z" fill="#fff" />
                    <path d="M141 12h26v4h-26z" fill="#ffd400" />
                    <path d="M202 13h13l2 2h12v1h-27z" fill="#e5a50a" />
                    <circle cx="278" cy="22" r="11" fill="#d9463c" />
                    <circle cx="340" cy="23" r="12" fill="#f2f2f2" />
                    <circle cx="342" cy="20" r="6" fill="#3f7fe8" />
                    <path d="M377 0h51v16h-51z" fill="#444" />
                    <path d="M377 0h5v16h-5z" fill="#82782a" />
                    <path d="M388 11h28v5h-28z" fill="#f9d817" />
                    <circle cx="402" cy="18" r="4" fill="#fff" />
                    <path d="M452 12h10l3 2h12v2h-25z" fill="#f4f4f4" />
                    <path d="M518 12h22v4h-22z" fill="#3f9de8" />
                    <circle cx="585" cy="23" r="12" fill="#1283bd" />
                    <circle cx="588" cy="18" r="5" fill="#9bd8f4" />
                    <path d="M638 12h23v4h-23z" fill="#fff" />
                    <path d="M642 12v4" stroke="#e33" />
                    <path d="M682 0h56v16h-56z" fill="#383838" />
                    <path d="M698 12h27v5h-27z" fill="#f4f4f4" stroke="#bbb" strokeWidth="2" />
                </svg>
                <svg width="16" height="16" viewBox="0 0 16 16" className="ml-auto mr-[198px] shrink-0"><path d="M0 15h15v1H0z" fill="#1e9bf0" /></svg>
                <time className="mt-[3px] mr-[42px] text-[15px] leading-5 text-white font-['Noto_Sans',sans-serif]">21:14</time>
                <svg width="20" height="16" viewBox="0 0 20 16" className="mr-[31px] shrink-0"><path d="M0 15h20v1H0z" fill="#fff" /></svg>
            </div>

            {/* Input method panel */}
            <div className="absolute right-0 bottom-4 h-[38px] flex gap-px">
                <div className="w-[87px] pl-2 flex items-center gap-2 bg-white border border-[#a8a8a8] text-[#6a6a6a]">
                    <span className="text-[20px] leading-6 font-['Noto_Sans_CJK_SC',sans-serif]">中</span>
                    <svg width="16" height="20" viewBox="0 0 16 20">
                        <circle cx="4" cy="5" r="2.5" fill="none" stroke="#6a6a6a" strokeWidth="1.2" />
                        <path d="M9 12c3-2 7 1 5 4-1 2-3 3-4 3 1-1 2-2 1-3-2 0-3-2-2-4z" fill="#6a6a6a" />
                    </svg>
                    <svg width="18" height="20" viewBox="0 0 18 20"><path d="M10 2c7 2 9 9 5 13-4 5-12 4-14 0 6 2 12-4 9-13z" fill="#6a6a6a" /></svg>
                </div>
                <button aria-label="Search" className="w-[36px] flex items-center justify-center bg-[#aaa] border border-[#ccc]">
                    <svg width="24" height="24" viewBox="0 0 24 24" fill="none" stroke="#fff"><circle cx="10" cy="9" r="7" strokeWidth="2.5" /><path d="M16 16l5 5" strokeWidth="4" /></svg>
                </button>
            </div>
        </div>
    );
}
